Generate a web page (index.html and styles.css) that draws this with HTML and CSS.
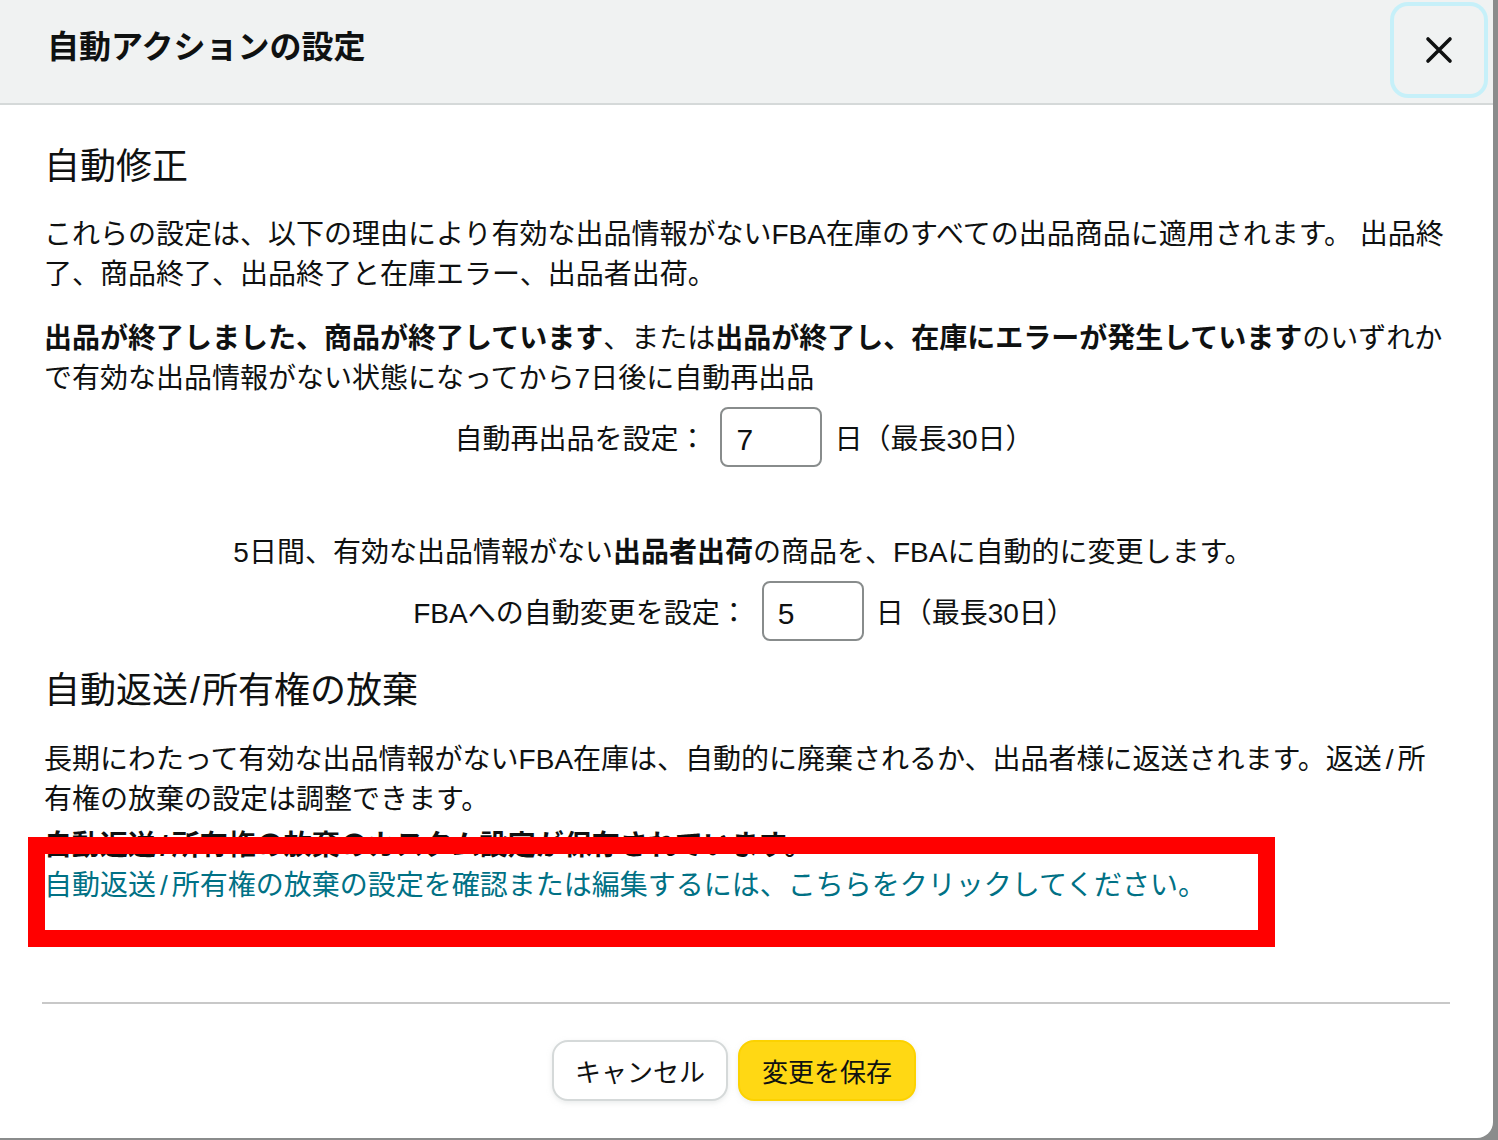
FILE: index.html
```html
<!DOCTYPE html>
<html lang="ja">
<head>
    <meta charset="UTF-8">
    <meta name="viewport" content="width=device-width, initial-scale=1.0">
    <title>自動アクションの設定</title>
    <link rel="stylesheet" href="styles.css">
</head>
<body>
    <div class="modal">
        <div class="modal-header">
            <h1 class="modal-title">自動アクションの設定</h1>
            <button class="close-btn" aria-label="閉じる">
                <svg width="28" height="28" viewBox="0 0 28 28">
                    <path d="M3 3 L25 25 M25 3 L3 25" stroke="#0f1111" stroke-width="3.6" stroke-linecap="round" fill="none"/>
                </svg>
            </button>
        </div>
        <div class="modal-body">
            <h2 class="section-title">自動修正</h2>
            <p class="text">これらの設定は、以下の理由により有効な出品情報がないFBA在庫のすべての出品商品に適用されます。 出品終了、商品終了、出品終了と在庫エラー、出品者出荷。</p>
            <p class="text"><b>出品が終了しました、商品が終了しています</b>、または<b>出品が終了し、在庫にエラーが発生しています</b>のいずれかで有効な出品情報がない状態になってから7日後に自動再出品</p>
            <div class="setting-row">
                <span class="label">自動再出品を設定：</span>
                <input class="day-input" type="text" value="7">
                <span class="suffix">日（最長30日）</span>
            </div>
            <p class="text centered gap-top">5日間、有効な出品情報がない<b>出品者出荷</b>の商品を、FBAに自動的に変更します。</p>
            <div class="setting-row">
                <span class="label">FBAへの自動変更を設定：</span>
                <input class="day-input" type="text" value="5">
                <span class="suffix">日（最長30日）</span>
            </div>
            <h2 class="section-title second">自動返送<span class="sep">/</span>所有権の放棄</h2>
            <p class="text tight">長期にわたって有効な出品情報がないFBA在庫は、自動的に廃棄されるか、出品者様に返送されます。返送<span class="sep">/</span>所有権の放棄の設定は調整できます。</p>
            <div class="saved">
                <p class="text"><b>自動返送<span class="sep">/</span>所有権の放棄のカスタム設定が保存されています。</b></p>
                <a class="link" href="#">自動返送<span class="sep">/</span>所有権の放棄の設定を確認または編集するには、こちらをクリックしてください。</a>
                <div class="highlight"></div>
            </div>
        </div>
        <div class="modal-footer">
            <button class="btn btn-cancel">キャンセル</button>
            <button class="btn btn-save">変更を保存</button>
        </div>
    </div>
</body>
</html>
```

FILE: styles.css
```css
* {
    margin: 0;
    padding: 0;
    box-sizing: border-box;
    font-family: "Liberation Sans", "Noto Sans CJK JP", sans-serif;
}
body {
    background: #8a8c8c;
    width: 1498px;
    height: 1140px;
    overflow: hidden;
}
.modal {
    width: 1493px;
    height: 1138px;
    background: #fff;
    border-radius: 0 0 16px 0;
    overflow: hidden;
    display: flex;
    flex-direction: column;
}
.modal-header {
    height: 105px;
    background: #f0f2f2;
    border-bottom: 2px solid #d5d9d9;
    display: flex;
    justify-content: space-between;
    align-items: flex-start;
    padding-left: 47px;
}
.modal-title {
    margin-top: 26px;
    font-size: 32px;
    line-height: 42px;
    font-weight: bold;
    color: #0f1111;
}
.close-btn {
    width: 90px;
    height: 88px;
    margin-top: 6px;
    margin-right: 9px;
    background: #f0f2f2;
    border: none;
    border-radius: 14px;
    box-shadow: 0 0 0 4px #c6f0f9;
    display: flex;
    align-items: center;
    justify-content: center;
    cursor: pointer;
}
.modal-body {
    padding: 38px 45px 0 44px;
    color: #0f1111;
}
.section-title {
    font-size: 36px;
    line-height: 48px;
    font-weight: normal;
    margin-bottom: 24px;
}
.section-title.second {
    margin-top: 26px;
    margin-bottom: 25px;
}
.sep {
    padding: 0 4px;
}
.section-title .sep {
    padding: 0 2px;
}
.text {
    font-size: 28px;
    line-height: 40px;
    margin-bottom: 24px;
}
.text b {
    font-weight: bold;
}
.text.tight {
    margin-bottom: 6px;
}
.centered {
    text-align: center;
    padding-right: 6px;
    margin-bottom: 8px;
}
.gap-top {
    margin-top: 66px;
}
.setting-row {
    display: flex;
    justify-content: center;
    align-items: center;
    padding-right: 4px;
    margin-top: -16px;
    font-size: 28px;
}
.centered + .setting-row {
    margin-top: 0;
}
.label {
    margin-right: 14px;
}
.day-input {
    width: 102px;
    height: 60px;
    border: 2px solid #888c8c;
    border-radius: 8px;
    padding: 6px 14px 0;
    font-size: 30px;
    color: #0f1111;
    background: #fff;
}
.suffix {
    margin-left: 12px;
}
.saved {
    position: relative;
}
.saved .text {
    margin-bottom: 0;
}
.link {
    display: block;
    font-size: 28px;
    line-height: 40px;
    color: #007185;
    text-decoration: none;
}
.highlight {
    position: absolute;
    top: 11px;
    left: -16px;
    width: 1247px;
    height: 110px;
    border: 17px solid #ff0000;
}
.modal-footer {
    margin: 96px 43px 0 42px;
    border-top: 2px solid #c8c8c8;
    padding: 36px 24px 0 0;
    display: flex;
    justify-content: center;
    gap: 10px;
}
.btn {
    height: 61px;
    padding: 0 21px;
    border-radius: 16px;
    font-size: 26px;
    color: #0f1111;
    cursor: pointer;
}
.btn-cancel {
    background: #fff;
    border: 2px solid #d5d9d9;
    box-shadow: 0 2px 5px rgba(213, 217, 217, 0.5);
}
.btn-save {
    background: #ffd814;
    border: 2px solid #fcd200;
    box-shadow: 0 2px 5px rgba(213, 217, 217, 0.5);
    padding: 0 22px;
}
```
